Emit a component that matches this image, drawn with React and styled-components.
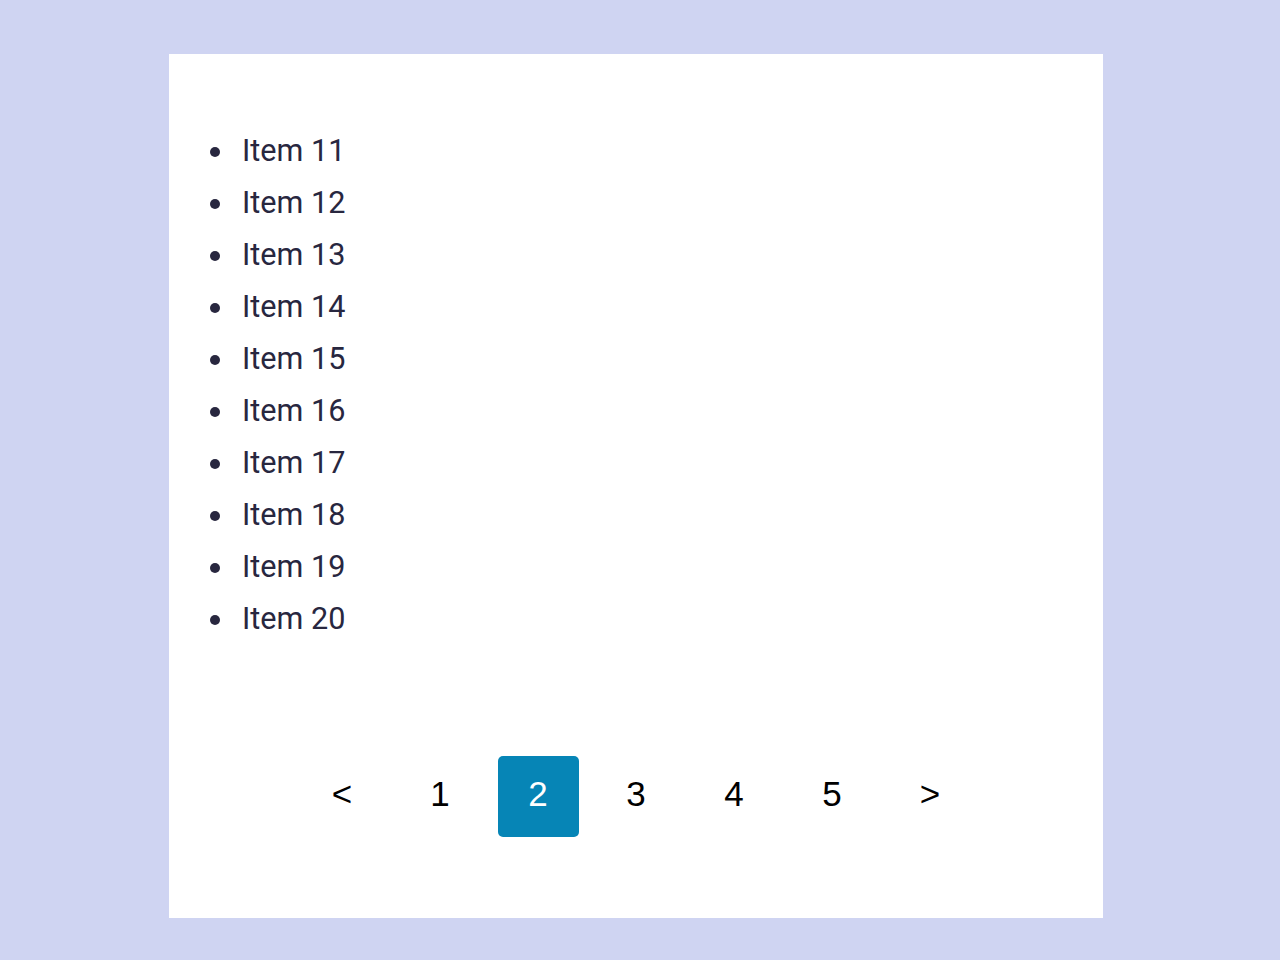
import React, { useState } from "react";
import styled, { createGlobalStyle } from "styled-components";

const GlobalStyle = createGlobalStyle`
  html, body {
    margin: 0;
    padding: 0;
    background: #cfd4f2;
  }
`;

const items = Array.from({ length: 50 }, (_, i) => `Item ${i + 1}`);
const PER_PAGE = 10;

export default function App() {
  const [page, setPage] = useState(2);
  const pages = Math.ceil(items.length / PER_PAGE);
  const visible = items.slice((page - 1) * PER_PAGE, page * PER_PAGE);

  return (
    <Page>
      <GlobalStyle />
      <Card>
        <List>
          {visible.map((item) => (
            <Item key={item}>{item}</Item>
          ))}
        </List>
        <Pager>
          <PageButton onClick={() => setPage((p) => Math.max(1, p - 1))}>
            &lt;
          </PageButton>
          {Array.from({ length: pages }, (_, i) => i + 1).map((n) => (
            <PageButton key={n} $active={n === page} onClick={() => setPage(n)}>
              {n}
            </PageButton>
          ))}
          <PageButton onClick={() => setPage((p) => Math.min(pages, p + 1))}>
            &gt;
          </PageButton>
        </Pager>
      </Card>
    </Page>
  );
}

const Page = styled.div`
  min-height: 960px;
  box-sizing: border-box;
  padding: 54px 8px 0 0;
  display: flex;
  justify-content: center;
  align-items: flex-start;
`;

const Card = styled.div`
  width: 934px;
  box-sizing: border-box;
  padding: 71px 34px 81px;
  background: #fff;
  display: flex;
  flex-direction: column;
`;

const List = styled.ul`
  margin: 0 0 111px;
  padding: 0 0 0 7px;
  list-style: none;
  font-family: Roboto, "Liberation Sans", sans-serif;
  font-size: 30.6px;
  color: #28273f;
`;

const Item = styled.li`
  display: flex;
  align-items: center;
  gap: 22px;
  height: 52px;
  line-height: 52px;
  &::before {
    content: "";
    width: 10px;
    height: 10px;
    border-radius: 50%;
    background: currentColor;
    flex-shrink: 0;
    margin-top: 2px;
  }
`;

const Pager = styled.div`
  display: flex;
  justify-content: center;
  gap: 17px;
`;

const PageButton = styled.button`
  width: 81px;
  height: 81px;
  border: none;
  border-radius: 5px;
  padding: 0 0 5px;
  background: ${(p) => (p.$active ? "#0685b6" : "transparent")};
  color: ${(p) => (p.$active ? "#fff" : "#000")};
  font-family: "Liberation Sans", Arial, sans-serif;
  font-size: 35px;
  cursor: pointer;
`;
